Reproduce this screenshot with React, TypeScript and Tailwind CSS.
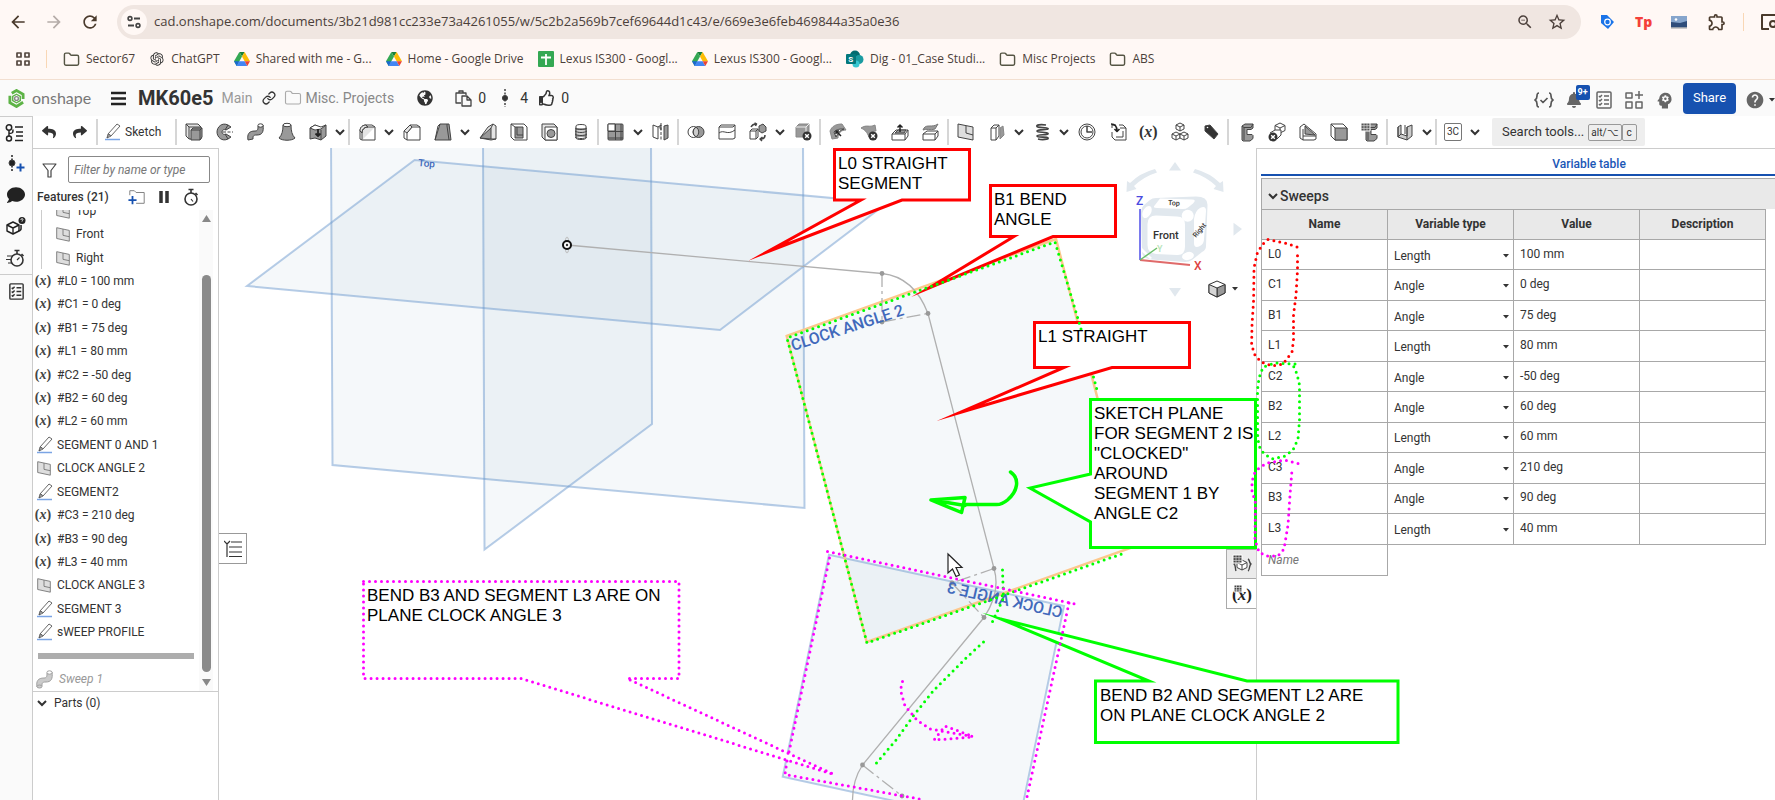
import type { ReactNode } from "react";
import { FaBell, FaComment, FaGlobeAmericas, FaPause, FaRegThumbsUp, FaReply, FaShare } from "react-icons/fa";
import {
  MdArrowBack,
  MdArrowForward,
  MdHelp,
  MdOutlineExtension,
  MdPsychology,
  MdRefresh,
  MdStarBorder,
  MdZoomOut,
} from "react-icons/md";
import { RiOpenaiFill } from "react-icons/ri";
import { Folder, Link } from "lucide-react";

const D = "#444";
const G = "#999";
const L = "#e4e4e4";

function Icon({ children, className = "h-5 w-5", box = 20 }: { children: ReactNode; className?: string; box?: number }) {
  return (
    <svg
      viewBox={`0 0 ${box} ${box}`}
      className={`shrink-0 ${className}`}
      fill="none"
      stroke={D}
      strokeWidth="1"
      strokeLinejoin="round"
      aria-hidden
    >
      {children}
    </svg>
  );
}

function Caret() {
  return (
    <svg viewBox="0 0 10 10" className="h-2.5 w-2.5" fill="none" stroke="#333" strokeWidth="2" aria-hidden>
      <path d="M1 3l4 4 4-4" />
    </svg>
  );
}

function SmallCaret({ className = "" }: { className?: string }) {
  return (
    <svg viewBox="0 0 6 4" className={`h-1 w-1.5 shrink-0 ${className}`} fill="#333" aria-hidden>
      <path d="M0 0h6L3 3.5z" />
    </svg>
  );
}

function VarGlyph() {
  return (
    <span className="whitespace-nowrap font-['Liberation_Serif',serif] text-sm leading-4 font-bold text-[#444]">
      (<i>x</i>)
    </span>
  );
}

function PencilIcon() {
  return (
    <Icon>
      <path d="M4 16l1-4 9-10 3 2-9 10-4 2zM5 12l3 2M4 16l3-4" strokeWidth=".9" stroke="#555" />
      <path d="M2 17.500h15" stroke="#7ba4e4" strokeWidth="1.500" />
    </Icon>
  );
}

function PlaneIcon() {
  return (
    <Icon className="h-[18px] w-[18px]">
      <path d="M3 3l14 3v12L3 15z" fill="#dedede" stroke="#777" />
      <path d="M10 4.500v7l7 1.500" stroke="#777" />
    </Icon>
  );
}

function SweepIcon() {
  return (
    <Icon>
      <path d="M2 18c-1-6 1-9 7-9 3 0 3-2 3-5l5-1c1 7-1 10-6 10-4 0-4 1-4 4z" fill={G} />
      <ellipse cx="14.500" cy="3.500" rx="2.600" ry="1.700" fill="#fff" />
      <ellipse cx="4.500" cy="17.500" rx="2.500" ry="1.500" fill={G} />
    </Icon>
  );
}

function ChecklistIcon({ className = "h-5 w-5", color = "#333" }: { className?: string; color?: string }) {
  return (
    <Icon className={className}>
      <g stroke={color} strokeWidth="1.500">
        <rect x="3" y="2" width="14" height="16" rx="1" />
        <path d="M5 6l1 1 2-2M5 10l1 1 2-2M5 14l1 1 2-2M10 6h5M10 10h5M10 14h5" />
      </g>
    </Icon>
  );
}

function StopwatchIcon({ lines }: { lines?: boolean }) {
  return (
    <Icon>
      <g stroke="#333" strokeWidth="1.600">
        <circle cx="11" cy="12" r="6" />
        <path d="M8.500 2.500h5M11 3v3M15.500 6l2 2" />
        {lines ? <path d="M11 12l2.500-2.500M1 8h6M0 11.500h5M2 15h4" strokeWidth="1.200" /> : <path d="M11 12l2 2.500" strokeWidth="1.200" />}
      </g>
    </Icon>
  );
}

function DriveIcon() {
  return (
    <svg viewBox="0 0 18 16" className="h-4 w-4 shrink-0" aria-hidden>
      <path d="M6 0h6l-3 5.200z" fill="#188038" />
      <path d="M6 0L0 10.500 3 16l6-10.800z" fill="#34a853" />
      <path d="M12 0l6 10.500h-6L9 5.200z" fill="#fbbc04" />
      <path d="M5.700 10.500H12L15 16H3z" fill="#4285f4" />
      <path d="M12 10.500h6L15 16z" fill="#ea4335" />
      <path d="M0 10.500h5.700L3 16z" fill="#1967d2" />
    </svg>
  );
}

const cube = (x: number, y: number, s: number, fill = "#fff") => (
  <g>
    <path d={`M${x} ${y + s * 0.25}l${s / 2} ${-s * 0.25} ${s / 2} ${s * 0.25}v${s * 0.5}l${-s / 2} ${s * 0.25} ${-s / 2} ${-s * 0.25}z`} fill={fill} />
    <path d={`M${x} ${y + s * 0.25}l${s / 2} ${s * 0.25} ${s / 2} ${-s * 0.25}M${x + s / 2} ${y + s * 0.5}v${s * 0.5}`} />
  </g>
);

const crossBadge = (x: number, y: number) => (
  <g>
    <circle cx={x} cy={y} r="4.500" fill="#333" stroke="none" />
    <path d={`M${x - 1.800} ${y - 1.800}l3.600 3.600M${x + 1.800} ${y - 1.800}l-3.600 3.600`} stroke="#fff" strokeWidth="1.400" />
  </g>
);

const beam = (
  <g>
    <path d="M6 4l3-2h8v4l-2 1.500h-4v5h5l1 1v3l-3 2.500H7l-1-1z" fill={G} />
    <path d="M6 4l2 1.500h7L17 2M8 5.500V18" />
  </g>
);

// feature tools in toolbar order
const tools: Record<string, ReactNode> = {
  Extrude: <><path d="M2 2h12l3 3v12H5l-3-3z" fill={L} /><path d="M7 8l2-2h9v9l-2 3H7z" fill={G} /><path d="M7 8h9v10M16 8l2-2M2 2l3 3v12M5 5h12" /></>,
  Revolve: <><path d="M13 3C7 0 2 5 2 10s5 10 11 7l3-2-5-3c-2 1-4 0-4-2s2-3 4-2l5-3z" fill={G} /><path d="M13 3l-3 5M13 17l-3-5" /><path d="M8 10h10" strokeDasharray="3 1.500" /></>,
  Sweep: <><path d="M2 18c-1-6 1-9 7-9 3 0 3-2 3-5l5-1c1 7-1 10-6 10-4 0-4 1-4 4z" fill={G} /><ellipse cx="14.500" cy="3.500" rx="2.600" ry="1.700" fill="#fff" /></>,
  Loft: <><path d="M6 3c0 6-1 10-4 13 3 3 13 3 16 0-3-3-4-7-4-13z" fill={G} /><ellipse cx="10" cy="3" rx="4" ry="1.700" fill="#fff" /></>,
  Thicken: <><path d="M2 6l5-3 6 3 5-3v11l-5 4-6-2-5 1z" fill={G} /><path d="M2 6l5-3 6 2 5-2-5 4-6 1z" fill="#fff" /><path d="M13 8v10" /><path d="M10 7v7M7.500 11.500L10 14l2.500-2.500" stroke="#222" strokeWidth="1.800" /></>,
  Fillet: <><path d="M3 17V9c0-4 3-6 6-6h6l3 2v13H5z" fill="#fff" /><path d="M5 18v-7c0-4 3-6 6-6h7M3 9c0-4 3-6 6-6l2 2c-4 0-6 3-6 6z" fill={L} /></>,
  Chamfer: <><path d="M2 16V9l6-6h7l3 2v13H5z" fill="#fff" /><path d="M5 18v-7l5-6h8" /><path d="M2 9l6-6 2 2-5 6z" fill={L} /></>,
  Draft: <><path d="M7 2h9l2 16H2z" fill={G} /><path d="M14 2v2l2 14M7 2L5 4 2 18" /></>,
  Rib: <><path d="M10 5l5-3 3 2v13l-5 1-11-2z" fill={L} /><path d="M2 16L13 6v11z" fill={G} /><path d="M13 6l2-4M13 17l5 0" /></>,
  Shell: <><path d="M2 2h13l3 3v13H5l-3-3z" fill="#fff" /><path d="M6 5h8v11H6z" fill={G} /><path d="M2 2l4 3M8 5v8h6" /></>,
  Hole: <><path d="M2 2h12l3 3v13H5l-3-3z" fill={L} /><path d="M5 5h12v13H5z" fill="#fff" /><circle cx="11" cy="11.500" r="4" fill={G} /></>,
  Thread: <><path d="M5 4c0-2 10-2 10 0v12c0 2-10 2-10 0z" fill="#fff" /><path d="M5 7h10v7H5z" fill="#ccc" /><path d="M4 6c3 2 9 2 12 0M4 9c3 2 9 2 12 0M4 12c3 2 9 2 12 0M4 15c3 2 9 2 12 0" /></>,
  Pattern: <><rect x="2" y="2" width="15" height="16" rx="1" fill={G} /><path d="M2 2h7v7H2z" fill="#fff" /><path d="M2 9.500h15M9.500 2v16M2 16h15M15 2v16" /></>,
  Mirror: <><path d="M2 3l5 2v12l-5-2z" fill="#fff" /><path d="M7 5l3-2v5M13 4l4-1v13l-4 2z" fill={G} /><path d="M10 1v18" strokeDasharray="3 1.500" /></>,
  Boolean: <><circle cx="7.500" cy="10" r="5.500" fill="#fff" /><circle cx="12.500" cy="10" r="5.500" fill={G} /><path d="M10 5.200a5.500 5.500 0 0 1 0 9.600 5.500 5.500 0 0 1 0-9.600z" fill="#ccc" /></>,
  Split: <><path d="M2 5l2-2h14v13l-2 1H2z" fill="#fff" /><path d="M2 5h14l2-2M2 11c5-4 8 3 16-3" /></>,
  Transform: <><path d="M2 9l2-2h6v8l-2 2H2z" fill="#fff" /><path d="M2 9h6v8M8 9l2-2" /><path d="M11 4l4-2 3 3v4l-4 2-3-2z" fill={G} /><path d="M3 5c1-2 3-3 5-3M6.500 1l2 1-1 2M17 13c0 2-1 4-4 4M14.500 15L12 17l2 2" strokeWidth="1.500" /></>,
  "Delete part": <><path d="M3 5l3-3h10v10l-3 3H3z" fill={G} stroke="#888" /><path d="M3 5h10v10M13 5l3-3" stroke="#eee" />{crossBadge(14, 14)}</>,
  "Modify fillet": <><path d="M2 9c2-5 6-7 12-7l4 6c-5 0-8 3-8 8l-6 1z" fill={G} stroke="#888" /><path d="M6 10c3-3 6-3 10-3-4 1-6 4-8 8z" fill="#fff" /><path d="M13 14L8 9M8 12V9h3" stroke="#222" strokeWidth="1.500" /></>,
  "Delete face": <><path d="M2 6c6-4 8 0 14-3l1 6c-4 0-6 2-7 6C8 10 6 8 2 6z" fill={G} stroke="#888" />{crossBadge(14, 14)}</>,
  "Move face": <><path d="M2 12l4-4h12v6l-3 4H2z" fill="#fff" /><path d="M2 12h13v6M15 12l3-4" /><path d="M5 11l3-3h8l-2 3z" fill={G} /><path d="M10 10V3M7.500 5.500L10 3l2.500 2.500" stroke="#222" strokeWidth="1.500" /></>,
  "Replace face": <><path d="M2 12l4-3h11v5l-3 4H2z" fill="#fff" /><path d="M2 12h12v6M14 12l3-3" /><path d="M3 6c3-4 8 0 14-4l-3 5c-5 2-8-1-12 1z" fill={G} stroke="#777" /></>,
  Plane: <><path d="M2 2l15 3v13L2 15z" fill="#dedede" /><path d="M10 4v7l7 2" /></>,
  Frame: <><path d="M4 6l3-3h5v11l-3 4H4z" fill="#fff" /><path d="M4 6h5v12M9 6l3-3" /><path d="M13 6l3-2 1 9-4 4z" fill={G} stroke="#888" /></>,
  Helix: <><path d="M14 3C8 2 4 3 5 4.500s10 .5 11 2-11 .5-11 2.500 10 .5 11 2.500-11 .5-11 2.500 10 .5 11 2-6 2-10 1" strokeWidth="1.700" /></>,
  Clock: <><circle cx="10" cy="10" r="8" fill="#fff" /><circle cx="10" cy="10" r="6" fill="#fff" /><path d="M10 4v6h5" strokeWidth="1.500" /></>,
  Derived: <><path d="M4 6V3h4M11 3h4l3 3v12H7l-3-3v-5" fill="#fff" /><path d="M12 6h6M15 9v6H8" /><path d="M3 2c5 0 6 3 6 7M6.500 7L9 9.500 11.500 7" strokeWidth="1.600" stroke="#222" /></>,
  Variable: <text x="0" y="15" className="font-['Liberation_Serif',serif] text-[16px] font-bold" fill="#333" stroke="none">(<tspan fontStyle="italic">x</tspan>)</text>,
  Composite: <>{cube(6, 1, 8)}{cube(2, 10, 8)}{cube(10, 10, 8)}</>,
  Tag: <><path d="M4 4l5-1 8 9-4 5-9-8z" fill="#333" /><circle cx="6.500" cy="5.500" r=".8" fill="#fff" stroke="none" /></>,
  Beam: beam,
  Trim: <>{cube(8, 1, 10)}<path d="M3 11l5-3h6v5l-4 4" fill="#fff" />{crossBadge(6, 15)}</>,
  Gusset: <><path d="M2 5l4-3 12 10v5l-2 1H5l-3-2z" fill="#fff" /><path d="M7 4v8l10 1z" fill={G} /><path d="M5 18V7M5 14h13" /></>,
  "End cap": <><path d="M2 2h12l4 4v12H6l-4-4z" fill="#fff" /><path d="M6 6h12v12H6z" fill={G} /><path d="M2 2l4 4" /></>,
  "Cut list": <>{beam}<path d="M1 1h9v8H1z" fill="#555" stroke="#fff" /><path d="M1 3.700h9M1 6.400h9M4 1v8M7 1v8" stroke="#ddd" strokeWidth=".7" /></>,
  "Sheet metal": <><path d="M3 5l3-2v9l6 2V5l5-2v11l-5 4-9-3z" fill="#ccc" /><path d="M3 5v10M10 3v9M12 5v13M6 12l-3 3" /></>,
};

const toolGroups: string[][] = [
  ["Extrude", "Revolve", "Sweep", "Loft", "Thicken", "v"],
  ["Fillet", "v", "Chamfer", "Draft", "v", "Rib", "Shell", "Hole", "Thread"],
  ["Pattern", "v", "Mirror"],
  ["Boolean", "Split", "Transform", "v", "Delete part"],
  ["Modify fillet", "Delete face", "Move face", "Replace face"],
  ["Plane", "Frame", "v", "Helix", "v", "Clock", "Derived", "Variable", "Composite", "Tag"],
  ["Beam", "Trim", "Gusset", "End cap", "Cut list"],
  ["Sheet metal", "v"],
];

const bookmarks = [
  { label: "Sector67", kind: "folder" },
  { label: "ChatGPT", kind: "gpt" },
  { label: "Shared with me - G...", kind: "drive" },
  { label: "Home - Google Drive", kind: "drive" },
  { label: "Lexus IS300 - Googl...", kind: "sheet" },
  { label: "Lexus IS300 - Googl...", kind: "drive" },
  { label: "Dig - 01_Case Studi...", kind: "sharepoint" },
  { label: "Misc Projects", kind: "folder" },
  { label: "ABS", kind: "folder" },
];

const features: Array<{ label: string; kind: "plane" | "var" | "sketch" }> = [
  { label: "#L0 = 100 mm", kind: "var" },
  { label: "#C1 = 0 deg", kind: "var" },
  { label: "#B1 = 75 deg", kind: "var" },
  { label: "#L1 = 80 mm", kind: "var" },
  { label: "#C2 = -50 deg", kind: "var" },
  { label: "#B2 = 60 deg", kind: "var" },
  { label: "#L2 = 60 mm", kind: "var" },
  { label: "SEGMENT 0 AND 1", kind: "sketch" },
  { label: "CLOCK ANGLE 2", kind: "plane" },
  { label: "SEGMENT2", kind: "sketch" },
  { label: "#C3 = 210 deg", kind: "var" },
  { label: "#B3 = 90 deg", kind: "var" },
  { label: "#L3 = 40 mm", kind: "var" },
  { label: "CLOCK ANGLE 3", kind: "plane" },
  { label: "SEGMENT 3", kind: "sketch" },
  { label: "sWEEP PROFILE", kind: "sketch" },
];

const variables = [
  ["L0", "Length", "100 mm"],
  ["C1", "Angle", "0 deg"],
  ["B1", "Angle", "75 deg"],
  ["L1", "Length", "80 mm"],
  ["C2", "Angle", "-50 deg"],
  ["B2", "Angle", "60 deg"],
  ["L2", "Length", "60 mm"],
  ["C3", "Angle", "210 deg"],
  ["B3", "Angle", "90 deg"],
  ["L3", "Length", "40 mm"],
];

function BookmarkIcon({ kind }: { kind: string }) {
  if (kind === "drive") return <DriveIcon />;
  if (kind === "gpt") return <RiOpenaiFill className="h-4 w-4 shrink-0 text-[#333]" />;
  if (kind === "sheet")
    return (
      <svg viewBox="0 0 16 16" className="h-4 w-4 shrink-0" aria-hidden>
        <rect width="16" height="16" rx="1" fill="#34a853" />
        <path d="M3 6.500h10M8 3v11" stroke="#fff" strokeWidth="1.800" />
      </svg>
    );
  if (kind === "sharepoint")
    return (
      <svg viewBox="0 0 18 18" className="h-[18px] w-[18px] shrink-0" aria-hidden>
        <circle cx="9" cy="5.500" r="5" fill="#036c70" />
        <circle cx="13" cy="9.500" r="4.500" fill="#1a9ba1" />
        <circle cx="10" cy="14" r="3.500" fill="#37c6d0" />
        <rect x="0" y="4" width="10" height="10" rx="1" fill="#03787c" />
        <text x="2.300" y="12" fill="#fff" className="font-[Roboto,sans-serif] text-[8px] font-bold">S</text>
      </svg>
    );
  return <Folder className="h-[17px] w-[17px] shrink-0 text-[#554]" strokeWidth={2} />;
}

function BrowserChrome() {
  return (
    <div className="shrink-0 border-b border-[#f3dfd0] bg-[#fff8f5] font-['Open_Sans','Noto_Sans',sans-serif] text-[#4b3f3a]">
      <div className="flex h-[39px] items-center pt-1">
        <nav className="flex w-[117px] shrink-0 items-center gap-4 pl-2">
          <button aria-label="Back"><MdArrowBack className="h-5 w-5 text-[#4a3a2c]" /></button>
          <button aria-label="Forward"><MdArrowForward className="h-5 w-5 text-[#b5aca8]" /></button>
          <button aria-label="Reload"><MdRefresh className="h-5 w-5 text-[#4a3a2c]" /></button>
        </nav>
        <div className="flex h-[34px] flex-1 items-center rounded-full bg-[#f0e6e1] pr-3.5 pl-1">
          <button aria-label="Site information" className="flex h-[26px] w-[26px] shrink-0 items-center justify-center rounded-full bg-[#fff8f5]">
            <Icon className="h-4 w-4" box={16}>
              <path d="M8 4.500h6M2 11.500h6" strokeWidth="1.800" />
              <circle cx="4" cy="4.500" r="1.900" strokeWidth="1.600" />
              <circle cx="12" cy="11.500" r="1.900" strokeWidth="1.600" />
            </Icon>
          </button>
          <input
            aria-label="Address"
            className="min-w-0 flex-1 bg-transparent pl-[7px] text-[13px] outline-none"
            defaultValue="cad.onshape.com/documents/3b21d981cc233e73a4261055/w/5c2b2a569b7cef69644d1c43/e/669e3e6feb469844a35a0e36"
          />
          <button aria-label="Zoom out"><MdZoomOut className="h-[18px] w-[18px]" /></button>
          <button aria-label="Bookmark" className="ml-[13px]"><MdStarBorder className="h-5 w-5" /></button>
        </div>
        <div className="flex w-[194px] shrink-0 items-center gap-5 overflow-hidden pl-[18px]">
          <svg viewBox="0 0 16 16" className="h-4 w-4 shrink-0" aria-hidden>
            <path d="M2 1h6l7 7-6 7-7-6z" fill="#1a73e8" />
            <circle cx="8.500" cy="8" r="2.800" fill="none" stroke="#fff" strokeWidth="1.200" />
          </svg>
          <span className="w-4 shrink-0 text-center text-sm leading-4 font-extrabold text-[#f4403a]">Tp</span>
          <svg viewBox="0 0 16 16" className="h-4 w-4 shrink-0" aria-hidden>
            <rect y="2" width="16" height="12" fill="#2f4d7a" />
            <path d="M0 2h16v5L9 9 0 8z" fill="#86a5cc" />
            <circle cx="5" cy="5.500" r="1.300" fill="#fff" />
            <path d="M0 14h16" stroke="#bbb" strokeWidth="1.500" />
          </svg>
          <MdOutlineExtension className="h-5 w-5 shrink-0 text-[#4a3a2c]" />
          <span className="-mx-1 h-[18px] w-px shrink-0 bg-[#f9d7b5]" />
          <Icon className="h-5 w-5">
            <path d="M9 17H2V3h15v4" stroke="#4a3a2c" strokeWidth="2" />
            <circle cx="13" cy="12" r="3" stroke="#4a3a2c" strokeWidth="2" />
          </Icon>
        </div>
      </div>
      <div className="flex h-10 items-center pl-4 text-xs">
        <button aria-label="Apps">
          <Icon className="h-[14px] w-[14px]" box={14}>
            <path d="M1 1h4v4H1zM9 1h4v4H9zM1 9h4v4H1zM9 9h4v4H9z" strokeWidth="1.700" stroke="#554840" />
          </Icon>
        </button>
        <span className="mr-4 ml-4 h-[18px] w-px bg-[#f9d7b5]" />
        <ul className="flex items-center gap-3.5">
          {bookmarks.map((b, i) => (
            <li key={i}>
              <a href="#" className="flex items-center gap-1.5 whitespace-nowrap">
                <BookmarkIcon kind={b.kind} />
                {b.label}
              </a>
            </li>
          ))}
        </ul>
      </div>
    </div>
  );
}

function DocumentHeader() {
  return (
    <header className="flex h-9 shrink-0 items-center overflow-hidden bg-[#fafafa] pl-2 text-[#333]">
      <svg viewBox="0 0 18 20" className="h-[19px] w-[17px] shrink-0" fill="none" aria-hidden>
        <path d="M4 4.500L9 1.500l7 4v5M16 14l-7 4.500-7-4V7" stroke="#5db346" strokeWidth="3" />
        <path d="M9 5.500l4 2.300v4.500L9 14.500l-4-2.200V7.800z" stroke="#5db346" strokeWidth="1.500" />
        <circle cx="9" cy="10" r="2" stroke="#888" strokeWidth="1.500" />
      </svg>
      <span className="ml-[7px] w-[62px] font-[Lato,sans-serif] text-base leading-5 text-[#777]">onshape</span>
      <button aria-label="Document menu" className="ml-[17px]">
        <Icon className="h-[15px] w-[15px]" box={15}>
          <path d="M0 2h15M0 7.500h15M0 13h15" stroke="#222" strokeWidth="2.600" />
        </Icon>
      </button>
      <h1 className="ml-3 text-xl leading-6 font-bold">MK60e5</h1>
      <span className="ml-2 text-sm text-[#999]">Main</span>
      <Link className="ml-2.5 h-[14px] w-[14px] text-[#333]" strokeWidth={2.200} />
      <Folder className="ml-2 h-[18px] w-[18px] text-[#aaa]" strokeWidth={1.500} />
      <a href="#" className="ml-[3px] text-sm text-[#888]">Misc. Projects</a>
      <FaGlobeAmericas className="ml-[23px] h-4 w-4" />
      <div className="ml-[22px] flex items-center text-sm">
        <Icon className="h-[17px] w-[17px]" box={17}>
          <path d="M6 13H1V3h10v2M4 3V1h4v2" strokeWidth="1.300" />
          <path d="M7 6h5l4 4v6H7zM12 6v4h4" strokeWidth="1.300" />
        </Icon>
        <span className="ml-1.5 w-[18px]">0</span>
        <Icon className="h-[18px] w-[18px]" box={18}>
          <path d="M9 0v18" strokeDasharray="2 1.500" strokeWidth="1.500" />
          <circle cx="9" cy="9" r="2.600" fill="#333" />
        </Icon>
        <span className="ml-[6px] w-[19px]">4</span>
        <FaRegThumbsUp className="h-4 w-4" />
        <span className="ml-[6px]">0</span>
      </div>
      <div className="ml-auto flex w-[241px] shrink-0 items-center text-[#666]">
        <button aria-label="Checks" className="w-[30px] pt-1">
          <Icon className="h-5 w-5">
            <path d="M5 3C3 3 3 4 3 6s0 3-2 4c2 1 2 2 2 4s0 3 2 3M15 3c2 0 2 1 2 3s0 3 2 4c-2 1-2 2-2 4s0 3-2 3M6.500 10l2.500 2.500L13.500 8" strokeWidth="1.700" stroke="#555" />
          </Icon>
        </button>
        <button aria-label="Notifications" className="relative flex h-9 w-[31px] items-center pl-0.5">
          <FaBell className="mt-1 h-4 w-4" />
          <span className="absolute top-[5px] left-[12px] h-[15px] rounded-xs bg-[#1651b0] px-[2px] text-[9px] leading-[15px] font-bold text-white">9+</span>
        </button>
        <button aria-label="Tasks" className="w-[30px] pt-1"><ChecklistIcon color="#666" /></button>
        <button aria-label="App store" className="w-[31px] pt-1">
          <Icon>
            <path d="M2 3h6v5H2zM2 12h6v6H2zM12 12h6v6h-6zM15 1v8M11 5h8" stroke="#666" strokeWidth="1.500" />
          </Icon>
        </button>
        <button aria-label="Learning" className="w-[29px] pt-1"><MdPsychology className="h-[21px] w-[21px]" /></button>
        <button className="h-[31px] w-[53px] shrink-0 rounded bg-[#1651b0] text-[13px] text-white">Share</button>
        <button aria-label="Help" className="ml-[9px] flex shrink-0 items-center gap-1 pt-1">
          <MdHelp className="h-5 w-5" />
          <SmallCaret />
        </button>
      </div>
    </header>
  );
}

function Separator() {
  return <span className="mx-px h-[26px] w-0.5 shrink-0 bg-[#d6d6d6]" />;
}

function Toolbar() {
  return (
    <div className="flex h-8 shrink-0 items-center overflow-hidden bg-white text-[#333]">
      <button aria-label="Feature list" className="flex h-8 w-[33px] shrink-0 items-center justify-center border-t border-r border-[#ccc] bg-[#fafafa] pr-1">
        <Icon>
          <g stroke="#222" strokeWidth="1.500">
            <circle cx="5" cy="4.500" r="2.700" />
            <circle cx="5" cy="15.500" r="2.500" />
            <path d="M5 7v6M5 10.500c4 0 4-1 4-4M11 4h8M12 9h7M12 13h7M11 17.500h8" />
          </g>
        </Icon>
      </button>
      <button aria-label="Undo" className="flex w-[31px] shrink-0 justify-center"><FaReply className="h-3.5 w-3.5" /></button>
      <button aria-label="Redo" className="flex w-[31px] shrink-0 justify-center"><FaShare className="h-3.5 w-3.5" /></button>
      <Separator />
      <button className="flex w-[75px] shrink-0 items-center gap-0.5 pl-1 text-xs"><PencilIcon />Sketch</button>
      <Separator />
      {toolGroups.map((group, i) => (
        <div key={i} className="flex shrink-0 items-center">
          {group.map((name, j) =>
            name === "v" ? (
              <button key={j} aria-label="More tools" className="flex w-3.5 justify-center"><Caret /></button>
            ) : (
              <button key={j} aria-label={name} className="flex w-[31px] justify-center">
                <Icon>{tools[name]}</Icon>
              </button>
            ),
          )}
          <Separator />
        </div>
      ))}
      <button className="ml-[6px] h-[18px] w-[18px] shrink-0 rounded-xs border border-[#777] text-[10px] leading-4">3C</button>
      <button aria-label="More custom tools" className="ml-2 shrink-0"><Caret /></button>
      <button className="ml-3 flex h-7 shrink-0 items-center rounded-xs bg-[#eee] pr-2 pl-[10px] text-[13px]">
        <span className="pr-1">Search tools...</span>
        <kbd className="h-[17px] rounded-xs border border-[#999] px-0.5 font-[Roboto,sans-serif] text-[10px] leading-4">alt/⌥</kbd>
        <kbd className="h-[17px] rounded-xs border border-[#999] px-1 font-[Roboto,sans-serif] text-[10px] leading-4">c</kbd>
      </button>
    </div>
  );
}

function SideRail() {
  return (
    <nav className="flex w-[33px] shrink-0 flex-col items-center border-r border-[#ccc] bg-[#fafafa] text-[#333]">
      <button aria-label="Versions" className="flex h-8 items-center">
        <Icon>
          <path d="M6 1v17" stroke="#222" strokeWidth="1.500" strokeDasharray="2 1.500" />
          <circle cx="6" cy="9" r="3" fill="#222" />
          <path d="M14.500 9.500v8M10.500 13.500h8" stroke="#1651b0" strokeWidth="2" />
        </Icon>
      </button>
      <button aria-label="Comments" className="flex h-[30px] items-center"><FaComment className="h-[18px] w-[18px] text-[#222]" /></button>
      <button aria-label="Part help" className="flex h-8 items-center">
        <Icon>
          <g strokeWidth="1.400" stroke="#222">{cube(1, 6, 12)}</g>
          <path d="M12 15c4 0 3-3 3-6" stroke="#222" strokeWidth="1.500" />
          <circle cx="16" cy="4.500" r="3.500" fill="#222" stroke="none" />
          <path d="M15 4c0-2 2-1.500 2-.5s-1 .8-1 2" stroke="#fff" />
        </Icon>
      </button>
      <button aria-label="Regeneration times" className="flex h-[33px] w-full items-center justify-center border-b border-[#ccc]">
        <StopwatchIcon lines />
      </button>
      <button aria-label="Checklist" className="flex h-8 items-center"><ChecklistIcon className="h-[19px] w-[19px]" /></button>
    </nav>
  );
}

function FeaturePanel() {
  return (
    <aside className="flex w-[186px] shrink-0 flex-col border-t border-r border-[#ccc] bg-white text-xs text-[#333]">
      <div className="flex items-center pt-[7px] pr-2 pl-2">
        <Icon className="h-[18px] w-[18px]" box={18}>
          <path d="M2 3h13l-5 6.500V16H7V9.500z" strokeWidth="1.200" />
        </Icon>
        <input
          aria-label="Filter features"
          placeholder="Filter by name or type"
          className="ml-[9px] h-[27px] min-w-0 flex-1 rounded-xs border border-[#888] px-[5px] italic outline-none placeholder:text-[#777]"
        />
      </div>
      <div className="flex h-[27px] items-center pl-1">
        <h2 className="w-[91px] font-medium">Features (21)</h2>
        <button aria-label="New folder">
          <Icon className="h-[18px] w-[18px]">
            <path d="M2 8V3h5l2 2h9v12H9" stroke="#777" />
            <path d="M5 9v9M0.500 13.500h9" stroke="#1651b0" strokeWidth="2" />
          </Icon>
        </button>
        <button aria-label="Pause" className="ml-2.5">
          <Icon className="h-4 w-4" box={16}>
            <path d="M5 2v12M11 2v12" stroke="#333" strokeWidth="3.500" />
          </Icon>
        </button>
        <button aria-label="Timing" className="ml-2"><StopwatchIcon /></button>
      </div>
      <div className="flex h-[482px] overflow-hidden border-b border-[#ccc]">
        <div className="min-w-0 flex-1">
          <ul className="-mt-[11px] grid h-[445px] auto-rows-fr">
            {["Top", "Front", "Right"].map((name) => (
              <li key={name} className="ml-2 flex items-center gap-1 border-l border-[#ccc] pl-3">
                <PlaneIcon />
                {name}
              </li>
            ))}
            {features.map((f) => (
              <li key={f.label} className="flex items-center gap-1 whitespace-nowrap">
                <span className="flex w-5 justify-center">
                  {f.kind === "var" ? <VarGlyph /> : f.kind === "plane" ? <span className="pl-0.5"><PlaneIcon /></span> : <span className="pl-1"><PencilIcon /></span>}
                </span>
                {f.label}
              </li>
            ))}
          </ul>
          <div className="mt-[9px] ml-[5px] h-1.5 w-[156px] bg-[#adadad]" />
          <div className="mt-2.5 flex items-center gap-1 pl-0.5 text-[#999] italic">
            <span className="opacity-50"><SweepIcon /></span>
            Sweep 1
          </div>
        </div>
        <div className="mr-[5px] flex w-3.5 flex-col items-center bg-[#fafafa] py-[5px]">
          <svg viewBox="0 0 9 7" className="h-[7px] w-[9px]" fill="#888" aria-hidden><path d="M0 7L4.500 0 9 7z" /></svg>
          <span className="mt-[53px] w-[9px] flex-1 rounded-full bg-[#8a8a8a]" />
          <svg viewBox="0 0 9 7" className="mt-[7px] h-[7px] w-[9px]" fill="#888" aria-hidden><path d="M0 0L4.500 7 9 0z" /></svg>
        </div>
      </div>
      <button className="flex items-center gap-[7px] pt-[3px] pl-1"><Caret />Parts (0)</button>
    </aside>
  );
}

function Scene() {
  return (
    <svg viewBox="219 148 1037 652" className="absolute top-0 left-0 h-[652px] w-[1037px]" fill="none" aria-hidden>
      <g fill="rgba(85,135,175,0.06)" stroke="rgba(105,150,205,0.48)" strokeWidth="2">
        <path d="M331 140H803L804.500 508L332.500 465Z" />
        <path d="M483 140H651L652 424L484.500 549.500Z" />
        <path d="M247 286L414.600 160L887 203L720 330Z" />
        <path d="M829 554.700L1064 606L1018 828L782.700 776.700Z" />
      </g>
      <path d="M786.700 336L1056 239L1136 546L866.700 642Z" fill="rgba(85,135,175,0.06)" stroke="#fcc88c" strokeWidth="2.500" />

      <g stroke="#b0b0b0" strokeWidth="1.300">
        <path d="M567 245L882 273.500Q914 277 928 313.500L994 568.500Q1001 592 984 617.500L862.500 765Q852 781 852.500 802" />
        <path d="M882 273V322M882 322L928 313.500M994 568.500L952 583M952 583L984 617.500M862.500 765L902 796" strokeDasharray="14 4 3 4" />
      </g>
      <g fill="#999">
        <circle cx="882" cy="273.500" r="2.400" />
        <circle cx="882" cy="322" r="2.400" />
        <circle cx="928" cy="313.500" r="2.400" />
        <circle cx="994" cy="568.500" r="2.400" />
        <circle cx="952" cy="583" r="2.400" />
        <circle cx="984" cy="617.500" r="2.400" />
        <circle cx="862.500" cy="765" r="2.400" />
        <circle cx="902" cy="796" r="2.400" />
      </g>
      <ellipse cx="567" cy="245" rx="2" ry="8" stroke="#bbb" />
      <circle cx="567" cy="245" r="4" fill="#fff" stroke="#111" strokeWidth="2" />
      <circle cx="567" cy="245" r="1.200" fill="#333" />

      <g fill="#4169bb" className="font-[Roboto,sans-serif] text-[16px] font-medium">
        <text transform="translate(793 351) rotate(-18)">CLOCK ANGLE 2</text>
        <text transform="translate(1061 618) scale(-1 1) rotate(-12.5)">CLOCK ANGLE 3</text>
        <text className="text-[10px]" transform="translate(418 166) rotate(5)">Top</text>
      </g>

      {/* view cube */}
      <g fill="#e1e8ee">
        <path d="M1175 162l6 8.500h-12zM1233.500 222.700l8.500 6.300-8.500 6.700zM1169 288h12l-6 8.700z" />
        <path d="M1155 169l2 3.500q-13 4-23 13.500l2.500 3-10 3 .5-11 3 2q10-10 25-14z" />
        <path d="M1195 169l-2 3.500q13 4 23 13.500l-2.500 3 10 3-.5-11-3 2q-10-10-25-14z" />
        <path d="M1141 212q0-4 3-7l6-5q2-2 6-2l40-1.500q12 0 11.500 9L1206 246q0 4-4 6l-10 8q-3 2-7 2l-34-2.500q-9-1-9-8z" />
      </g>
      <g fill="#fff">
        <path d="M1156 215.500l21 1q8 0 8 8v22q0 9-8 8.500l-21-1q-8.500-1-8.500-9v-21q0-8.500 8.500-8.500z" />
        <path d="M1160 198.500l32 1q5 0 1 4l-5 4q-2 1.500-5 1.500l-26-1q-5 0-2-3z" />
        <path d="M1194 219q1-8 6-11 6-3 6 3l-2 28q0 5-4 7-6 3-6-3z" />
        <circle cx="1187.700" cy="215.700" r="6" />
        <ellipse cx="1147" cy="212" rx="4" ry="6.500" transform="rotate(30 1147 212)" />
        <ellipse cx="1188" cy="256" rx="6" ry="4" transform="rotate(-15 1188 256)" />
        <path d="M1141 247l11 11-2 1-9-8z" />
      </g>
      <g fill="#333" className="font-[Roboto,sans-serif] text-[11px] font-medium">
        <text x="1153" y="239">Front</text>
        <text className="text-[7px]" transform="translate(1168 205) rotate(3)">Top</text>
        <text className="text-[7px]" transform="translate(1196 238) rotate(-50)">Right</text>
      </g>
      <path d="M1140 209V260" stroke="#7a7aee" strokeWidth="2" />
      <path d="M1140 260L1190 265" stroke="#e06a6a" strokeWidth="2" />
      <path d="M1140 260L1157 248" stroke="#6abf6a" strokeWidth="1.500" />
      <g className="font-[Roboto,sans-serif] text-[12px] font-medium">
        <text x="1136" y="205" fill="#4a4ae0">Z</text>
        <text x="1194" y="270" fill="#dd4444">X</text>
        <text x="1157" y="252" fill="#b8e4b8" className="text-[9px]">Y</text>
      </g>
      <g stroke="#333" strokeLinejoin="round">
        <path d="M1209 284.500l8-3.500 8 3.500v8.500l-8 4-8-4z" fill="#fff" />
        <path d="M1217 288l8-3.500v8.500l-8 4z" fill="#999" />
        <path d="M1209 284.500l8 3.500v9l-8-4z" fill="#d5d5d5" />
      </g>
      <path d="M1232 287h6l-3 3.500z" fill="#333" />
    </svg>
  );
}

function Annotations() {
  return (
    <svg
      viewBox="219 148 1037 652"
      className="pointer-events-none absolute top-0 left-0 z-10 h-[652px] w-[1037px] overflow-visible"
      fill="none"
      strokeWidth="3"
      strokeMiterlimit="40"
      role="img"
      aria-label="Callouts"
    >
      <g fill="#fff" stroke="#f00">
        <path d="M834.500 149.500H969.500V200H902L768 251.500L861 200H834.500Z" />
        <path d="M990.500 185.500H1115.500V236.500H1053L929 288L1014 236.500H990.500Z" />
        <path d="M1034.500 322.500H1189.500V367.500H1112L960 412.500L1064 367.500H1034.500Z" />
      </g>
      <g fill="#fff" stroke="#0f0">
        <path d="M1090.500 399.500H1255.500V547.500H1090.500V522L1030 488L1090.500 474Z" />
        <path d="M1095.500 681H1149L1001 619L1247 681H1398V742.500H1095.500Z" />
      </g>
      <g stroke="#0f0" strokeLinejoin="round" strokeLinecap="round" strokeWidth="3.500">
        <path d="M1010.500 472q7 5 6 13t-9 15q-6 5-12 4.500H964" />
        <path d="M931 500L965 497.500L961.500 512.500ZM932 500L965 505.500" />
      </g>
      <g strokeLinecap="round" strokeDasharray="0 6">
        <path d="M363.500 581.500H679V678.500H627L834 774.500L521 678.500H363.500Z" fill="#fff" stroke="#f0f" />
        <g stroke="#0f0">
          <path d="M1081 329L1055 242L787 338L867 643L1123 553.500" />
          <path d="M1093.500 377L1097 390" />
          <path d="M1002.500 570L1003.500 598L990.500 626" />
          <path d="M983.500 642L966 658L934 690L914 715L896 740L874 766" />
        </g>
        <g stroke="#f0f">
          <path d="M827.500 551.500L1075 604" />
          <path d="M829.500 558L789 752M787 761L785 774.500L925 800" />
          <path d="M1069 603L1027 797" />
          <path d="M902.500 681.500L900.500 690L905 706L917 720L930 729L973 736.500L945 726L934 740L973 737" />
        </g>
      </g>
      <g fill="#000" stroke="none" className="font-['Liberation_Sans',Arial,sans-serif] text-[17px]">
        <text>
          <tspan x="838" y="169">L0 STRAIGHT</tspan>
          <tspan x="838" y="189">SEGMENT</tspan>
        </text>
        <text>
          <tspan x="994" y="205">B1 BEND</tspan>
          <tspan x="994" y="225">ANGLE</tspan>
        </text>
        <text x="1038" y="342">L1 STRAIGHT</text>
        <text>
          <tspan x="1094" y="419">SKETCH PLANE</tspan>
          <tspan x="1094" y="439">FOR SEGMENT 2 IS</tspan>
          <tspan x="1094" y="459">"CLOCKED"</tspan>
          <tspan x="1094" y="479">AROUND</tspan>
          <tspan x="1094" y="499">SEGMENT 1 BY</tspan>
          <tspan x="1094" y="519">ANGLE C2</tspan>
        </text>
        <text>
          <tspan x="1100" y="701">BEND B2 AND SEGMENT L2 ARE</tspan>
          <tspan x="1100" y="721">ON PLANE CLOCK ANGLE 2</tspan>
        </text>
        <text>
          <tspan x="367" y="601">BEND B3 AND SEGMENT L3 ARE ON</tspan>
          <tspan x="367" y="621">PLANE CLOCK ANGLE 3</tspan>
        </text>
      </g>
      <path d="M948 554v19l4.500-4 3.500 7.500 3.500-1.500-3.500-7.500h6z" fill="#fff" stroke="#222" strokeWidth="1.200" />
    </svg>
  );
}

function Viewport() {
  return (
    <main className="relative min-w-0 flex-1 bg-white">
      <Scene />
      <button aria-label="Show list" className="absolute top-[385px] left-0 flex h-[31px] w-7 items-center justify-center border border-l-0 border-[#999] bg-white">
        <Icon className="h-[18px] w-[18px]" box={18}>
          <path d="M0 1l3 3 3-3M3 4v13M7 2h11M5 7h13M5 12h13M5 16.500h13" stroke="#333" strokeWidth="1.200" />
        </Icon>
      </button>
      <div className="absolute top-[401px] right-0 flex w-[30px] flex-col border border-r-0 border-[#aaa]">
        <button aria-label="Configurations" className="flex h-[29px] items-center justify-center border-b border-[#aaa] bg-[#ebebeb]">
          <Icon>
            <path d="M4 6c-1 1 0 3-2 4 2 1 1 5 2 7M16 5c2 1 1 4 3 5-2 1-1 6-3 7" strokeWidth="1.400" />
            {cube(5, 6, 10)}
            <path d="M1 1h9v8H1z" fill="#444" stroke="#fff" />
            <path d="M1 3.700h9M1 6.400h9M4 1v8M7 1v8" stroke="#ddd" strokeWidth=".7" />
          </Icon>
        </button>
        <button aria-label="Variables" className="flex h-[29px] items-center justify-center bg-white">
          <Icon>
            <text x="0" y="16" className="font-['Liberation_Serif',serif] text-[17px] font-bold" fill="#222" stroke="none">(<tspan fontStyle="italic">x</tspan>)</text>
            <path d="M2 1h8v7H2z" fill="#444" stroke="#fff" />
            <path d="M2 3.500h8M2 6h8M4.500 1v7M7.300 1v7" stroke="#ddd" strokeWidth=".7" />
          </Icon>
        </button>
      </div>
      <Annotations />
    </main>
  );
}

function VariablePanel() {
  return (
    <section className="relative w-[519px] shrink-0 border-t border-l border-[#ccc] bg-white text-xs text-[#333]">
      <div className="overflow-hidden pl-1">
        <div className="w-[656px]">
          <button className="h-[27px] w-full border-b-2 border-[#1651b0] pt-1 font-medium text-[#1b57b6]">Variable table</button>
          <button className="mt-0.5 flex h-[31px] w-full items-center gap-0.5 border border-b-0 border-[#a8a8a8] bg-[#e9e9e9] pt-1 pl-1.5 text-sm font-medium">
            <Caret />
            Sweeps
          </button>
        </div>
        <table className="h-[367px] w-[505px] table-fixed border-collapse text-left">
          <thead>
            <tr className="h-[30px] bg-[#e9e9e9]">
              {["Name", "Variable type", "Value", "Description"].map((h) => (
                <th key={h} className="border border-[#a8a8a8] pb-0.5 text-center font-bold">{h}</th>
              ))}
            </tr>
          </thead>
          <tbody>
            {variables.map(([name, type, value]) => (
              <tr key={name} className="h-[30px]">
                <td className="border border-[#a8a8a8] px-1.5 pb-0.5">{name}</td>
                <td className="border border-[#a8a8a8] pt-0.5 pl-1.5">
                  <div className="flex items-center pr-1">
                    <select aria-label={`${name} type`} defaultValue={type} className="flex-1 appearance-none bg-transparent outline-none">
                      <option>Length</option>
                      <option>Angle</option>
                    </select>
                    <SmallCaret />
                  </div>
                </td>
                <td className="border border-[#a8a8a8] px-1.5 pb-0.5">{value}</td>
                <td className="border border-[#a8a8a8]" />
              </tr>
            ))}
            <tr className="h-[31px]">
              <td className="border border-[#a8a8a8] px-1.5">
                <input aria-label="New variable name" placeholder="Name" className="w-full italic outline-none placeholder:text-[#777]" />
              </td>
            </tr>
          </tbody>
        </table>
      </div>
      <svg
        viewBox="1257 149 100 420"
        className="pointer-events-none absolute top-0 left-0 z-20 h-[420px] w-[100px] overflow-visible"
        fill="none"
        strokeWidth="3"
        strokeLinecap="round"
        strokeDasharray="0 6"
        aria-hidden
      >
        <path stroke="#f00" d="M1297 247L1285 243L1268 239.500L1262 245L1257 254L1254 268L1253.600 300L1252 325L1251.600 345L1255 355L1261 362L1272 366L1283 364L1292 352L1293.500 340V315L1296 295L1297.500 270V250" />
        <path stroke="#0f0" d="M1295 364L1275 363L1263 367L1259 378L1257.500 390L1257.700 436L1259 446L1264 454L1273 459L1285 456L1293 450L1298 439L1299.500 420V385L1297 374L1293 365" />
        <path stroke="#f0f" d="M1298 463.500L1285 460L1267 463L1259 468L1254 474L1252 482V491L1255.500 503L1255 540L1259 552L1266 556H1278L1284 549L1288 525L1290 495L1292 470" />
      </svg>
    </section>
  );
}

export default function App() {
  return (
    <div className="flex h-screen flex-col overflow-hidden bg-white font-[Roboto,sans-serif]">
      <BrowserChrome />
      <DocumentHeader />
      <Toolbar />
      <div className="flex min-h-0 flex-1">
        <SideRail />
        <FeaturePanel />
        <Viewport />
        <VariablePanel />
      </div>
    </div>
  );
}
